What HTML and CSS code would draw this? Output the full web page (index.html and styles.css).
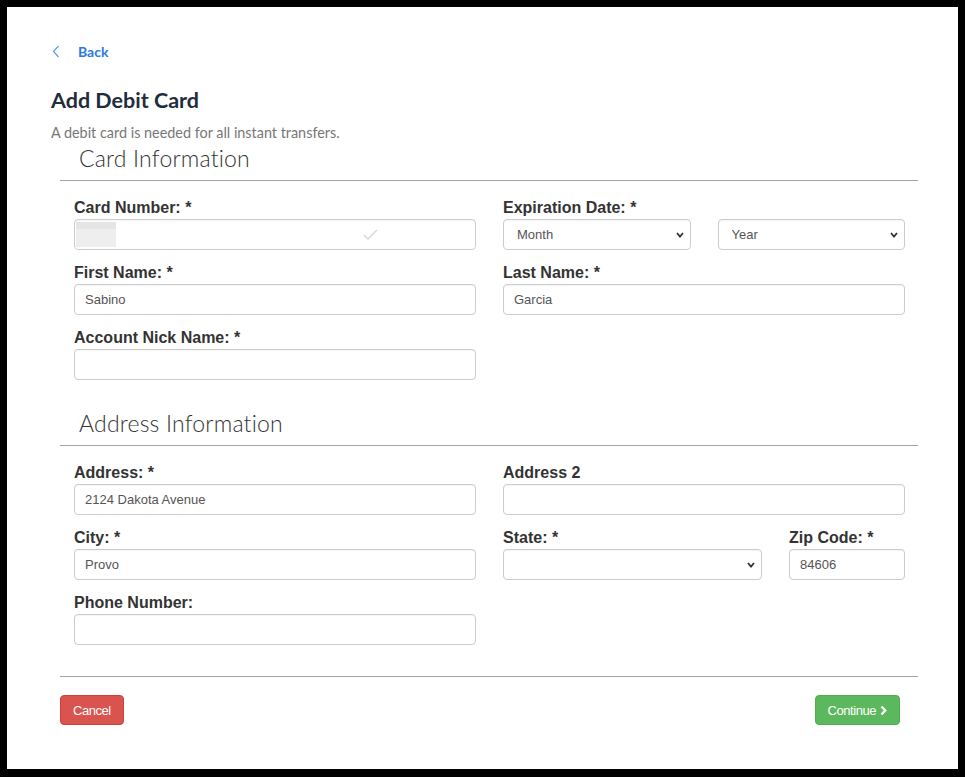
FILE: index.html
```html
<!DOCTYPE html>
<html lang="en">
<head>
  <meta charset="UTF-8">
  <title>Add Debit Card</title>
  <link rel="stylesheet" href="styles.css">
</head>
<body>
  <div class="page">
    <a class="back-link" href="#">
      <svg class="back-icon" width="8" height="13" viewBox="0 0 8 13"><polyline points="6.5,1 1.5,6.5 6.5,12" fill="none" stroke="#5b9cf0" stroke-width="1.2"/></svg>
      <span>Back</span>
    </a>

    <h1 class="page-title">Add Debit Card</h1>
    <p class="page-sub">A debit card is needed for all instant transfers.</p>

    <form class="card-form">
      <!-- Card info -->
      <section class="form-section">
        <h2 class="section-title">Card Information</h2>
        <hr class="rule">
        <div class="grid">
          <div class="field">
            <label>Card Number: *</label>
            <div class="input-wrap">
              <input type="text" class="input">
              <span class="redact"></span>
              <svg class="check" width="15" height="11" viewBox="0 0 15 11"><polyline points="1,6 5,10 14,1" fill="none" stroke="#d8d8d8" stroke-width="1.5"/></svg>
            </div>
          </div>
          <div class="field">
            <label>Expiration Date: *</label>
            <div class="pair">
              <select class="input select"><option>Month</option></select>
              <select class="input select"><option>Year</option></select>
            </div>
          </div>
          <div class="field">
            <label>First Name: *</label>
            <input type="text" class="input" value="Sabino">
          </div>
          <div class="field">
            <label>Last Name: *</label>
            <input type="text" class="input" value="Garcia">
          </div>
          <div class="field">
            <label>Account Nick Name: *</label>
            <input type="text" class="input">
          </div>
        </div>
      </section>

      <!-- Address info -->
      <section class="form-section">
        <h2 class="section-title">Address Information</h2>
        <hr class="rule">
        <div class="grid">
          <div class="field">
            <label>Address: *</label>
            <input type="text" class="input" value="2124 Dakota Avenue">
          </div>
          <div class="field">
            <label>Address 2</label>
            <input type="text" class="input">
          </div>
          <div class="field">
            <label>City: *</label>
            <input type="text" class="input" value="Provo">
          </div>
          <div class="state-zip">
            <div class="field">
              <label>State: *</label>
              <select class="input select"><option></option></select>
            </div>
            <div class="field">
              <label>Zip Code: *</label>
              <input type="text" class="input" value="84606">
            </div>
          </div>
          <div class="field">
            <label>Phone Number:</label>
            <input type="text" class="input">
          </div>
        </div>
      </section>

      <hr class="rule rule-bottom">
      <div class="actions">
        <button type="button" class="btn btn-cancel">Cancel</button>
        <button type="button" class="btn btn-continue">Continue
          <svg class="chev" width="7" height="11" viewBox="0 0 7 11"><polyline points="1.5,1.5 5.2,5.5 1.5,9.5" fill="none" stroke="#fff" stroke-width="2.4"/></svg>
        </button>
      </div>
    </form>
  </div>
</body>
</html>
```

FILE: styles.css
```css
/* Reset */
html {
  box-sizing: border-box;
  background: #000;
}
*, *:before, *:after {
  box-sizing: inherit;
}
body {
  margin: 0;
  padding: 7px 7px 8px 7px;
  font-family: 'Liberation Sans', Arial, sans-serif;
  color: #333;
}

/* White page area */
.page {
  background: #fff;
  height: 762px;
  padding: 36px 40px 0 44px;
}

/* Back link */
.back-link {
  display: flex;
  align-items: center;
  gap: 18px;
  height: 16px;
  margin-left: 1px;
  color: #2a7ae4;
  font-family: 'Lato', sans-serif;
  font-weight: 700;
  font-size: 14px;
  text-decoration: none;
}
.back-icon {
  display: block;
}

/* Header */
.page-title {
  margin: 29px 0 0 0;
  font-family: 'Lato', sans-serif;
  font-weight: 700;
  font-size: 21.5px;
  line-height: 24px;
  color: #1f2d3d;
}
.page-sub {
  margin: 12px 0 0 0;
  font-family: 'Lato', sans-serif;
  font-size: 14.4px;
  line-height: 18px;
  color: #777;
}

/* Form */
.card-form {
  margin-left: 9px;
}
.form-section + .form-section {
  margin-top: 19px;
}
.section-title {
  margin: 3px 0 0 19px;
  font-family: 'Lato', sans-serif;
  font-weight: 300;
  font-size: 23px;
  line-height: 26px;
  letter-spacing: 0.2px;
  color: #333;
}
.rule {
  border: 0;
  border-top: 1px solid #a4a4a4;
  margin: 9px 0 15px 0;
}
.rule-bottom {
  margin: 20px 0 18px 0;
}

.grid {
  display: grid;
  grid-template-columns: 1fr 1fr;
  column-gap: 27px;
  padding: 0 13px 0 14px;
}
.field {
  display: flex;
  flex-direction: column;
  margin-bottom: 11px;
}
.field label {
  font-weight: 700;
  font-size: 16px;
  line-height: 20px;
  padding-top: 2px;
  margin-bottom: 1px;
  color: #333;
}
.pair {
  display: grid;
  grid-template-columns: 1fr 1fr;
  column-gap: 27px;
}
.state-zip {
  display: grid;
  grid-template-columns: 259px 1fr;
  column-gap: 27px;
}

/* Inputs */
.input {
  width: 100%;
  height: 31px;
  padding: 0 10px;
  border: 1px solid #ccc;
  border-radius: 4px;
  background: #fff;
  font-family: 'Liberation Sans', Arial, sans-serif;
  font-size: 13px;
  color: #555;
  box-shadow: inset 0 1px 1px rgba(0, 0, 0, 0.04);
  outline: none;
}
.select {
  -webkit-appearance: none;
  appearance: none;
  padding-left: 13px;
  background-image: url("data:image/svg+xml;utf8,<svg xmlns='http://www.w3.org/2000/svg' width='8' height='6' viewBox='0 0 8 6'><polyline points='1,1 4,4.5 7,1' fill='none' stroke='%23333' stroke-width='1.8'/></svg>");
  background-repeat: no-repeat;
  background-position: right 6px center;
}
.input-wrap {
  position: relative;
}
.redact {
  position: absolute;
  left: 2px;
  top: 3px;
  width: 40px;
  height: 25px;
  background: linear-gradient(#e5e5e5 0, #e5e5e5 7px, #eeeeee 7px);
}
.check {
  position: absolute;
  left: 289px;
  top: 10px;
}

/* Buttons */
.actions {
  display: flex;
  justify-content: space-between;
  padding-right: 18px;
}
.btn {
  display: flex;
  align-items: center;
  gap: 4px;
  height: 30px;
  padding: 0 12px;
  border-radius: 4px;
  color: #fff;
  font-family: 'Liberation Sans', Arial, sans-serif;
  font-size: 13px;
  letter-spacing: -0.45px;
  cursor: pointer;
}
.btn-cancel {
  background: #d9534f;
  border: 1px solid #d43f3a;
}
.btn-continue {
  background: #5cb85c;
  border: 1px solid #4cae4c;
}
.chev {
  display: block;
}
```
